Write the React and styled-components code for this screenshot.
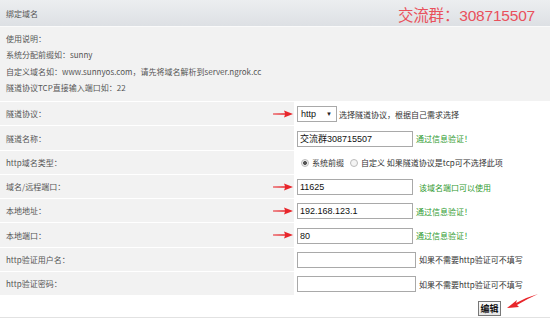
import React from "react";
import styled, { createGlobalStyle } from "styled-components";

const GlobalStyle = createGlobalStyle`
  html, body { margin: 0; padding: 0; background: #f3f3f3; }
  body { font-family: "Noto Sans CJK SC", "Liberation Sans", sans-serif; }
  * { box-sizing: border-box; }
`;

const Page = styled.div`
  width: 550px;
  background: #fff;
`;

const Header = styled.div`
  height: 27px;
  display: flex;
  align-items: center;
  justify-content: space-between;
  padding: 0 15px 0 6px;
  background: linear-gradient(#eceef0, #dde0e4);
  border-bottom: 1px solid #fafafa;
`;

const Title = styled.div`
  font-size: 8px;
  color: #555;
`;

const Group = styled.div`
  font-family: "Liberation Sans", "Noto Sans CJK SC", sans-serif;
  font-size: 15.5px;
  color: #e9515c;
  line-height: 1;
  margin-top: 5px;
  letter-spacing: -0.2px;
`;

const Info = styled.div`
  background: #f2f2f2;
  padding: 4px 6px 5px;
  border-bottom: 1px solid #fff;
`;

const InfoLine = styled.div`
  font-size: 8px;
  line-height: 16.3px;
  color: #555;
  white-space: nowrap;
`;

const Form = styled.div`
  display: grid;
  grid-template-columns: 294px 1fr;
`;

const Label = styled.div`
  position: relative;
  height: 24.25px;
  display: flex;
  align-items: center;
  padding-left: 6px;
  background: #f2f2f2;
  border-bottom: 1px solid #fff;
  font-size: 8px;
  color: #555;
`;

const Field = styled.div`
  height: 24.25px;
  display: flex;
  align-items: center;
  padding-left: 3px;
  background: #fff;
  font-size: 8px;
  color: #333;
  white-space: nowrap;
`;

const Arrow = styled.svg`
  position: absolute;
  right: 1px;
  top: 50%;
  margin-top: -4px;
`;

const SelectBox = styled.div`
  width: 40px;
  height: 16px;
  border: 1px solid #a9a9a9;
  display: flex;
  align-items: center;
  justify-content: space-between;
  padding: 0 4px 0 3px;
  font-family: "Liberation Sans", sans-serif;
  font-size: 9px;
  color: #111;
  margin-right: 2px;
`;

const Caret = styled.span`
  font-size: 6px;
  color: #222;
`;

const TextInput = styled.input`
  width: ${(p) => p.$w || 116}px;
  height: 16px;
  border: 1px solid #a9a9a9;
  padding: 0 2px;
  font-family: "Liberation Sans", "Noto Sans CJK SC", sans-serif;
  font-size: 9px;
  color: #111;
  outline: none;
  margin: 0 3px 0 0;
`;

const Ok = styled.span`
  color: #2f9a2f;
  font-size: 8px;
  margin-left: ${(p) => p.$ml || 0}px;
`;

const Hint = styled.span`
  color: #333;
  font-size: 8px;
  margin-left: ${(p) => p.$ml || 0}px;
`;

const Radio = styled.span`
  display: inline-block;
  width: 8px;
  height: 8px;
  border-radius: 50%;
  border: 1px solid #bbb;
  background: ${(p) => (p.$on ? "radial-gradient(circle, #555 0 1.8px, #eee 2.2px)" : "#f4f4f4")};
  margin: 0 3px 0 ${(p) => p.$ml || 0}px;
`;

const Footer = styled.div`
  position: relative;
  height: 22px;
  display: flex;
  align-items: center;
  justify-content: flex-end;
  padding-right: 49px;
  background: #fff;
  border-bottom: 1px solid #e2e2e2;
`;

const Button = styled.button`
  width: 23px;
  height: 15px;
  margin-top: 3px;
  padding: 0;
  border: 1px solid #777;
  background: linear-gradient(#fafafa, #e6e6e6);
  font-family: "Noto Sans CJK SC", sans-serif;
  font-size: 9px;
  font-weight: bold;
  color: #111;
  line-height: 1;
`;

const BigArrow = styled.svg`
  position: absolute;
  left: 505px;
  top: -3px;
`;

const RedArrow = () => (
  <Arrow width="20" height="8" viewBox="0 0 20 8">
    <path d="M0 3.6 L12 3.2 L11 0.5 L20 4 L11 7.5 L12 4.8 L0 4.4 Z" fill="#e8262b" />
  </Arrow>
);

const rows = [
  { label: "隧道协议：", arrow: true, kind: "select" },
  { label: "隧道名称：", kind: "input", value: "交流群308715507", ok: "通过信息验证！" },
  { label: "http域名类型：", kind: "radio" },
  { label: "域名/远程端口：", arrow: true, kind: "input", value: "11625", ok: "该域名端口可以使用", okMl: 3 },
  { label: "本地地址：", arrow: true, kind: "input", value: "192.168.123.1", ok: "通过信息验证！" },
  { label: "本地端口：", arrow: true, kind: "input", value: "80", ok: "通过信息验证！" },
  { label: "http验证用户名：", kind: "input", value: "", w: 119, hint: "如果不需要http验证可不填写" },
  { label: "http验证密码：", kind: "input", value: "", w: 119, hint: "如果不需要http验证可不填写" },
];

function FieldContent({ row }) {
  if (row.kind === "select") {
    return (
      <>
        <SelectBox>
          http<Caret>▼</Caret>
        </SelectBox>
        <Hint>选择隧道协议，根据自己需求选择</Hint>
      </>
    );
  }
  if (row.kind === "radio") {
    return (
      <>
        <Radio $on $ml={4} />
        <Hint>系统前缀</Hint>
        <Radio $ml={6} />
        <Hint>自定义 如果隧道协议是tcp可不选择此项</Hint>
      </>
    );
  }
  return (
    <>
      <TextInput type="text" defaultValue={row.value} $w={row.w} />
      {row.ok && <Ok $ml={row.okMl}>{row.ok}</Ok>}
      {row.hint && <Hint>{row.hint}</Hint>}
    </>
  );
}

export default function App() {
  return (
    <Page>
      <GlobalStyle />
      <Header>
        <Title>绑定域名</Title>
        <Group>交流群：308715507</Group>
      </Header>
      <Info>
        <InfoLine>使用说明：</InfoLine>
        <InfoLine>系统分配前缀如：sunny</InfoLine>
        <InfoLine>自定义域名如：www.sunnyos.com，请先将域名解析到server.ngrok.cc</InfoLine>
        <InfoLine>隧道协议TCP直接输入端口如：22</InfoLine>
      </Info>
      <Form>
        {rows.map((row) => (
          <React.Fragment key={row.label}>
            <Label>
              {row.label}
              {row.arrow && <RedArrow />}
            </Label>
            <Field>
              <FieldContent row={row} />
            </Field>
          </React.Fragment>
        ))}
      </Form>
      <Footer>
        <Button>编辑</Button>
        <BigArrow width="34" height="18" viewBox="0 0 34 18">
          <path d="M33 1 Q22 4 11 10 L12 7 L2 15 L14 14 L12 12 Q22 6 33 1 Z" fill="#e8262b" />
        </BigArrow>
      </Footer>
    </Page>
  );
}
